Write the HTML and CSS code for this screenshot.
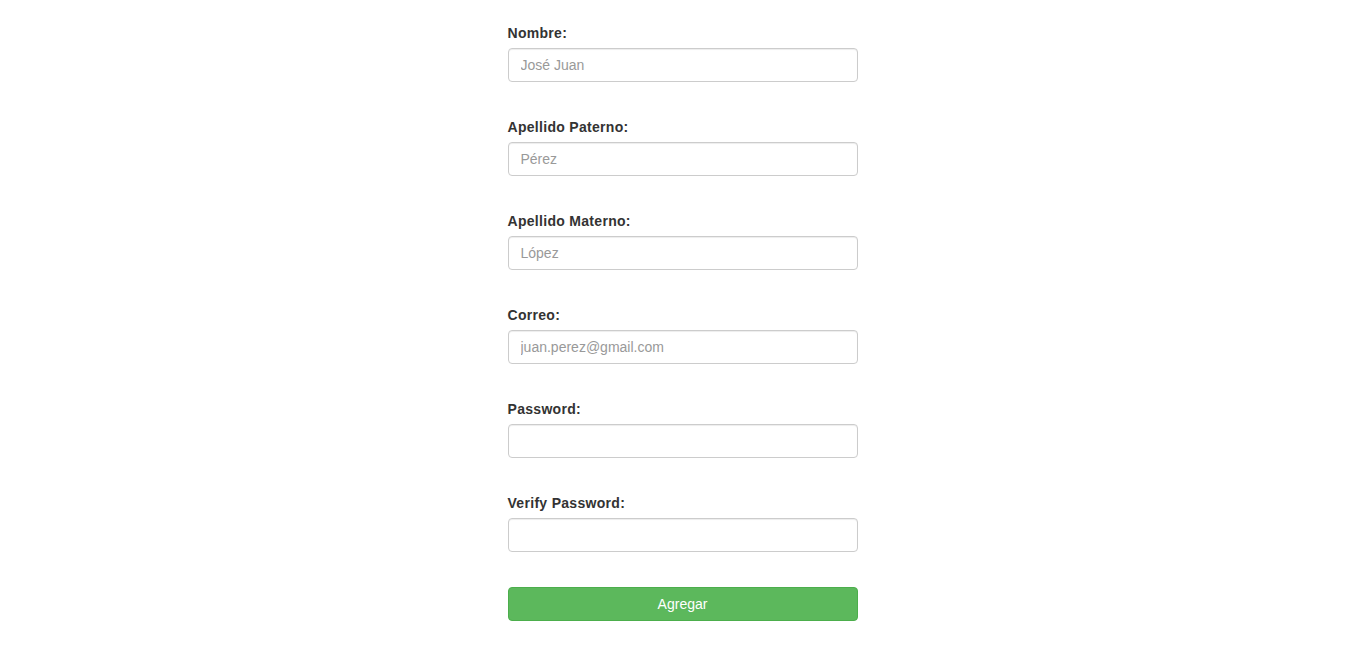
FILE: index.html
```html
<!DOCTYPE html>
<html lang="es">
<head>
<meta charset="utf-8">
<title>Registro</title>
<link rel="stylesheet" href="styles.css">
</head>
<body>
<form class="form">
  <div class="group">
    <label class="label" for="nombre">Nombre:</label>
    <input class="input" id="nombre" type="text" placeholder="José Juan">
  </div>
  <div class="group">
    <label class="label" for="paterno">Apellido Paterno:</label>
    <input class="input" id="paterno" type="text" placeholder="Pérez">
  </div>
  <div class="group">
    <label class="label" for="materno">Apellido Materno:</label>
    <input class="input" id="materno" type="text" placeholder="López">
  </div>
  <div class="group">
    <label class="label" for="correo">Correo:</label>
    <input class="input" id="correo" type="email" placeholder="juan.perez@gmail.com">
  </div>
  <div class="group">
    <label class="label" for="pass">Password:</label>
    <input class="input" id="pass" type="password">
  </div>
  <div class="group">
    <label class="label" for="pass2">Verify Password:</label>
    <input class="input" id="pass2" type="password">
  </div>
  <button class="btn" type="button">Agregar</button>
</form>
</body>
</html>
```
FILE: styles.css
```css
html, body {
  margin: 0;
  padding: 0;
  background: #fff;
}
body {
  font-family: "Liberation Sans", Arial, Helvetica, sans-serif;
  font-size: 14px;
  line-height: 20px;
  color: #333;
}
.form {
  width: 350px;
  margin: 0 auto;
  padding-top: 23px;
  display: flex;
  flex-direction: column;
  gap: 35px;
}
.group {
  display: flex;
  flex-direction: column;
}
.label {
  font-weight: bold;
  margin-bottom: 5px;
  line-height: 20px;
  letter-spacing: 0.3px;
}
.input {
  box-sizing: border-box;
  width: 100%;
  height: 34px;
  padding: 6px 12px;
  font-family: inherit;
  font-size: 14px;
  line-height: 20px;
  color: #555;
  background: #fff;
  border: 1px solid #ccc;
  border-radius: 4px;
  box-shadow: inset 0 1px 1px rgba(0,0,0,0.075);
  outline: none;
}
.input::placeholder {
  color: #999;
  opacity: 1;
}
.btn {
  box-sizing: border-box;
  width: 100%;
  height: 34px;
  padding: 6px 12px;
  font-family: inherit;
  font-size: 14px;
  line-height: 20px;
  color: #fff;
  background: #5cb85c;
  border: 1px solid #4cae4c;
  border-radius: 4px;
  cursor: pointer;
}
```
